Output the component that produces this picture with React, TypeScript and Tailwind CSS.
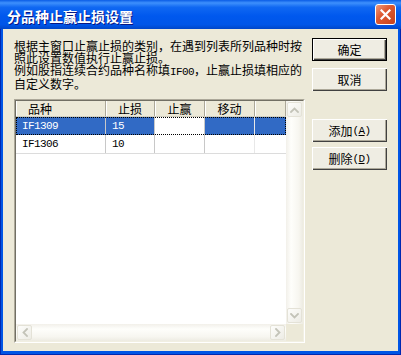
const cjk = "font-['Noto_Sans_CJK_SC',sans-serif]";
const latin = "font-['Liberation_Mono',monospace] text-[11px] tracking-[-0.6px]";

function Chevron({ dir }: { dir: "up" | "down" | "left" | "right" }) {
  const vertical = dir === "up" || dir === "down";
  const d = {
    up: "M1 5 L4.5 1.5 L8 5",
    down: "M1 1 L4.5 4.5 L8 1",
    left: "M5 1 L1.5 4.5 L5 8",
    right: "M1 1 L4.5 4.5 L1 8",
  }[dir];
  return (
    <svg width={vertical ? 9 : 6} height={vertical ? 6 : 9} viewBox={vertical ? "0 0 9 6" : "0 0 6 9"}>
      <path d={d} fill="none" stroke="#C3C3B8" strokeWidth="1.8" strokeLinecap="square" />
    </svg>
  );
}

function ArrowBtn({ dir }: { dir: "up" | "down" | "left" | "right" }) {
  return (
    <div className="w-[15px] h-[15px] m-[1px] shrink-0 rounded-[2px] border border-[#E4E2D7] bg-[linear-gradient(135deg,#FDFDFB,#EDECE5)] flex items-center justify-center">
      <Chevron dir={dir} />
    </div>
  );
}

function Button({ children, def }: { children: React.ReactNode; def?: boolean }) {
  return (
    <div
      className={`h-[23px] w-[75px] flex items-center justify-center text-[12px] leading-[12px] text-black bg-[#EFEDE3] shadow-[inset_1px_1px_#fff,inset_-1px_-1px_#404040,inset_-2px_-2px_#ACA899] ${cjk} ${
        def ? "border border-black" : ""
      }`}
    >
      {children}
    </div>
  );
}

function HeaderCell({ w, children, left }: { w: string; children?: React.ReactNode; left?: boolean }) {
  return (
    <div
      className={`${w} h-full flex items-center border-r border-[#ACA899] shadow-[inset_1px_0_#fff] ${
        left ? "pl-[12px]" : "justify-center"
      }`}
    >
      {children}
    </div>
  );
}

function Row({ code, loss, selected }: { code: string; loss: string; selected?: boolean }) {
  const txt = selected ? "text-white" : "text-black";
  const cell = selected ? "bg-[#316AC5]" : "bg-white";
  return (
    <div className={`relative flex h-[18px] ${txt}`}>
      <div className={`w-[90px] flex items-center pl-[6px] border-r border-[#C8C8C8] ${cell}`}>
        <span className={latin}>{code}</span>
      </div>
      <div className={`w-[49px] flex items-center pl-[6px] border-r border-[#C8C8C8] ${cell}`}>
        <span className={latin}>{loss}</span>
      </div>
      <div className="w-[50px] border-r border-[#C8C8C8] bg-white" />
      <div className={`w-[50px] border-r border-[#E8E8E8] ${cell}`} />
      <div className={`w-[31px] ${cell}`} />
      {selected && <div className="absolute inset-0 border border-dotted border-black" />}
    </div>
  );
}

export default function App() {
  return (
    <div className="w-[401px] h-[355px] flex flex-col bg-[#0055E5] shadow-[inset_1px_0_#0028B0,inset_-1px_0_#0028B0,inset_0_-1px_#0028B0]">
      <div className="h-[29px] shrink-0 flex items-center justify-between pl-[7px] pr-[5px] bg-[linear-gradient(to_bottom,#0A5CE6_0%,#3E90FC_10%,#1068F2_25%,#0058EE_55%,#0056E8_85%,#0046C8_100%)]">
        <span className={`text-white font-bold text-[14px] leading-[14px] pt-[2px] [text-shadow:1px_1px_#0A1883] ${cjk}`}>
          分品种止赢止损设置
        </span>
        <div className="w-[21px] h-[21px] rounded-[3px] border border-white bg-[linear-gradient(135deg,#EE9B7E,#DE5A33_40%,#C6421C)] flex items-center justify-center">
          <svg width="11" height="11" viewBox="0 0 11 11">
            <path d="M1.5 1.5 L9.5 9.5 M9.5 1.5 L1.5 9.5" stroke="#fff" strokeWidth="2.2" strokeLinecap="square" />
          </svg>
        </div>
      </div>

      <div className="flex-1 mx-[3px] mb-[4px] bg-[#ECE9D8] flex pl-[11px]">
        <div className="w-[291px] flex flex-col">
          <div className={`mt-[11px] text-[12px] leading-[12px] text-black whitespace-nowrap ${cjk}`}>
            <div>根据主窗口止赢止损的类别，在遇到列表所列品种时按</div>
            <div>照此设置数值执行止赢止损。</div>
            <div>
              例如股指连续合约品种名称填<span className={latin}>IF00</span>，止赢止损填相应的
            </div>
            <div>自定义数字。</div>
          </div>

          <div className="mt-[9px] h-[244px] border border-[#ACA899] border-r-white border-b-white">
            <div className="h-full flex flex-col border border-[#716F64] border-r-[#F1EFE2] border-b-[#F1EFE2] bg-white">
              <div className="flex flex-1 min-h-0">
                <div className={`w-[270px] flex flex-col text-[12px] leading-[12px] ${cjk}`}>
                  <div className="flex h-[16px] bg-[#ECE9D8] border-b border-[#D2CFC0] text-black">
                    <HeaderCell w="w-[90px]" left>
                      品种
                    </HeaderCell>
                    <HeaderCell w="w-[49px]">止损</HeaderCell>
                    <HeaderCell w="w-[50px]">止赢</HeaderCell>
                    <HeaderCell w="w-[50px]">移动</HeaderCell>
                    <HeaderCell w="w-[31px]" />
                  </div>
                  <Row code="IF1309" loss="15" selected />
                  <div className="border-b border-[#DCDCDC]">
                    <Row code="IF1306" loss="10" />
                  </div>
                </div>
                <div className="w-[17px] flex flex-col justify-between bg-[linear-gradient(to_right,#F2F0EA,#FEFEFB_30%,#F7F6F0_75%,#EDEBE2)]">
                  <ArrowBtn dir="up" />
                  <ArrowBtn dir="down" />
                </div>
              </div>
              <div className="flex h-[17px]">
                <div className="w-[270px] flex justify-between bg-[linear-gradient(to_bottom,#F2F0EA,#FEFEFB_30%,#F7F6F0_75%,#EDEBE2)]">
                  <ArrowBtn dir="left" />
                  <ArrowBtn dir="right" />
                </div>
                <div className="w-[17px] bg-[#ECE9D8]" />
              </div>
            </div>
          </div>
        </div>

        <div className="ml-[7px] w-[75px] flex flex-col pt-[9px]">
          <Button def>确定</Button>
          <div className="mt-[7px]">
            <Button>取消</Button>
          </div>
          <div className="mt-[28px]">
            <Button>
              添加<span className={latin}>(</span>
              <span className={`${latin} underline`}>A</span>
              <span className={latin}>)</span>
            </Button>
          </div>
          <div className="mt-[5px]">
            <Button>
              删除<span className={latin}> (</span>
              <span className={`${latin} underline`}>D</span>
              <span className={latin}>)</span>
            </Button>
          </div>
        </div>
      </div>
    </div>
  );
}
